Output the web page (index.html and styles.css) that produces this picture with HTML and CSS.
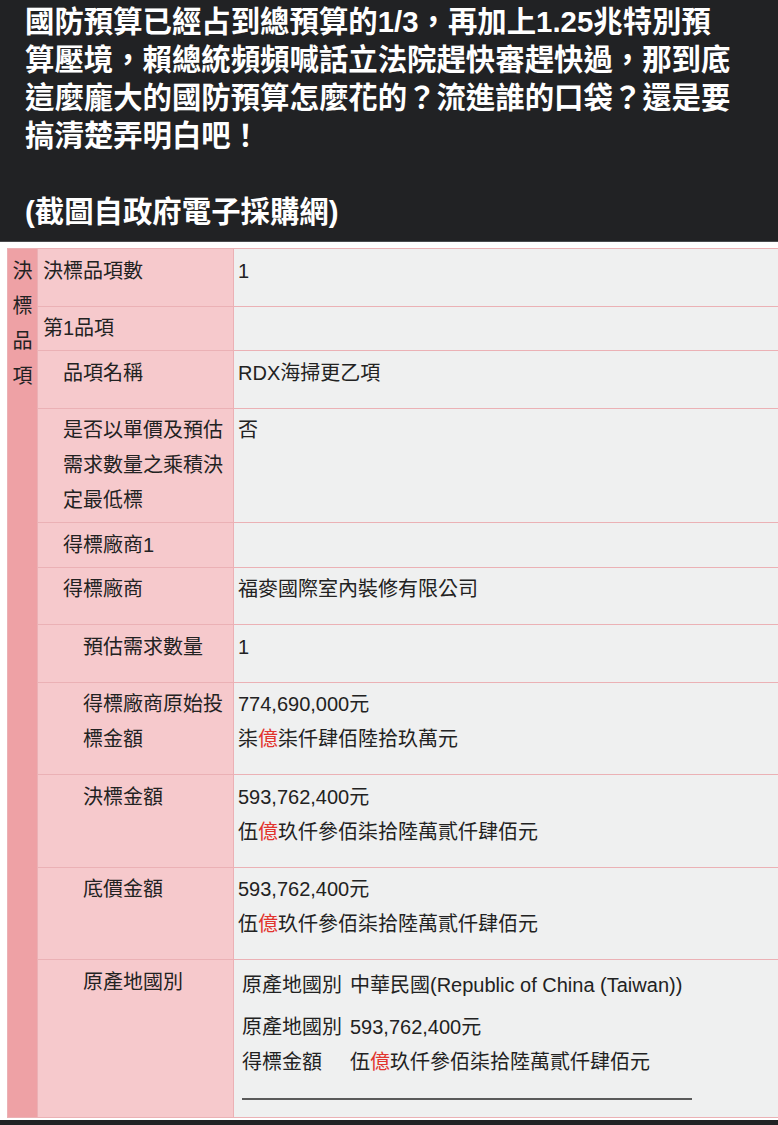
FILE: index.html
```html
<!DOCTYPE html>
<html lang="zh-Hant">
<head>
<meta charset="utf-8">
<title>決標品項</title>
<link rel="stylesheet" href="styles.css">
</head>
<body>
<header class="post">
  <p class="post-text">國防預算已經占到總預算的1/3，再加上1.25兆特別預算壓境，賴總統頻頻喊話立法院趕快審趕快過，那到底這麼龐大的國防預算怎麼花的？流進誰的口袋？還是要搞清楚弄明白吧！</p>
  <p class="post-text">(截圖自政府電子採購網)</p>
</header>
<main class="shot">
  <table class="award">
    <colgroup>
      <col class="col-group">
      <col class="col-label">
      <col class="col-value">
    </colgroup>
    <tr>
      <th class="group" rowspan="11"><span class="group-label">決標品項</span></th>
      <th class="label lvl1">決標品項數</th>
      <td class="value">1</td>
    </tr>
    <tr>
      <th class="label lvl1">第1品項</th>
      <td class="value empty"></td>
    </tr>
    <tr>
      <th class="label lvl2">品項名稱</th>
      <td class="value">RDX海掃更乙項</td>
    </tr>
    <tr>
      <th class="label lvl2">是否以單價及預估需求數量之乘積決定最低標</th>
      <td class="value">否</td>
    </tr>
    <tr>
      <th class="label lvl2">得標廠商1</th>
      <td class="value empty"></td>
    </tr>
    <tr>
      <th class="label lvl2">得標廠商</th>
      <td class="value">福麥國際室內裝修有限公司</td>
    </tr>
    <tr>
      <th class="label lvl3">預估需求數量</th>
      <td class="value">1</td>
    </tr>
    <tr>
      <th class="label lvl3">得標廠商原始投標金額</th>
      <td class="value">774,690,000元<br>柒<span class="unit">億</span>柒仟肆佰陸拾玖萬元</td>
    </tr>
    <tr>
      <th class="label lvl3">決標金額</th>
      <td class="value">593,762,400元<br>伍<span class="unit">億</span>玖仟參佰柒拾陸萬貳仟肆佰元</td>
    </tr>
    <tr>
      <th class="label lvl3">底價金額</th>
      <td class="value">593,762,400元<br>伍<span class="unit">億</span>玖仟參佰柒拾陸萬貳仟肆佰元</td>
    </tr>
    <tr>
      <th class="label lvl3">原產地國別</th>
      <td class="value origin">
        <div class="origin-grid">
          <span class="origin-key first">原產地國別</span><span class="origin-val first">中華民國(Republic of China (Taiwan))</span>
          <span class="origin-key">原產地國別</span><span class="origin-val">593,762,400元</span>
          <span class="origin-key">得標金額</span><span class="origin-val">伍<span class="unit">億</span>玖仟參佰柒拾陸萬貳仟肆佰元</span>
        </div>
        <hr class="origin-rule">
      </td>
    </tr>
  </table>
</main>
<div class="bottom-bar"></div>
</body>
</html>
```

FILE: styles.css
```css
html {
  overflow: hidden;
}

body {
  margin: 0;
  background: #ffffff;
  font-family: "Liberation Sans", "Noto Sans CJK TC", sans-serif;
  color: #222222;
}

.post {
  background: #212224;
  border-bottom: 1px solid #4a4b4d;
  padding: 3px 43px 10px 25px;
}

.post-text {
  margin: 0;
  color: #ffffff;
  font-weight: 700;
  font-size: 29.4px;
  line-height: 38px;
}

.post-text + .post-text {
  margin-top: 38px;
}

.shot {
  padding: 6px 0 2px 7px;
  overflow: hidden;
}

.award {
  border-collapse: collapse;
  table-layout: fixed;
  width: 786px;
  font-size: 20px;
  line-height: 35px;
}

.col-group {
  width: 30px;
}

.col-label {
  width: 196px;
}

.col-value {
  width: 560px;
}

.award th,
.award td {
  border: 1px solid #ebb1b5;
  text-align: left;
  vertical-align: top;
  font-weight: 400;
}

.group {
  background: #eea1a5;
  padding: 5px 0 4px;
  border-right-color: #f4c0c3;
}

.group-label {
  display: block;
  width: 20px;
  margin: 0 auto;
  word-break: break-all;
}

.label {
  background: #f6c9cc;
  padding: 4.5px 4px 4px 5px;
  border-right: 2px solid #e8a6ac;
}

.lvl2 {
  padding-left: 25px;
}

.lvl3 {
  padding-left: 45px;
}

.value {
  background: #eff0f0;
  padding: 4.5px 6px 17px 4px;
}

.value.empty {
  padding-bottom: 4px;
}

.unit {
  color: #e2342d;
}

.value.origin {
  padding: 8px 6px 17px 8px;
}

.origin-grid {
  display: grid;
  grid-template-columns: 108px auto;
  justify-content: start;
}

.origin-key.first,
.origin-val.first {
  margin-bottom: 7px;
}

.origin-rule {
  width: 450px;
  margin: 18px 0 0;
  border: 0;
  border-top: 2px solid #5a5a5a;
}

.bottom-bar {
  height: 10px;
  background: #212224;
}
```
